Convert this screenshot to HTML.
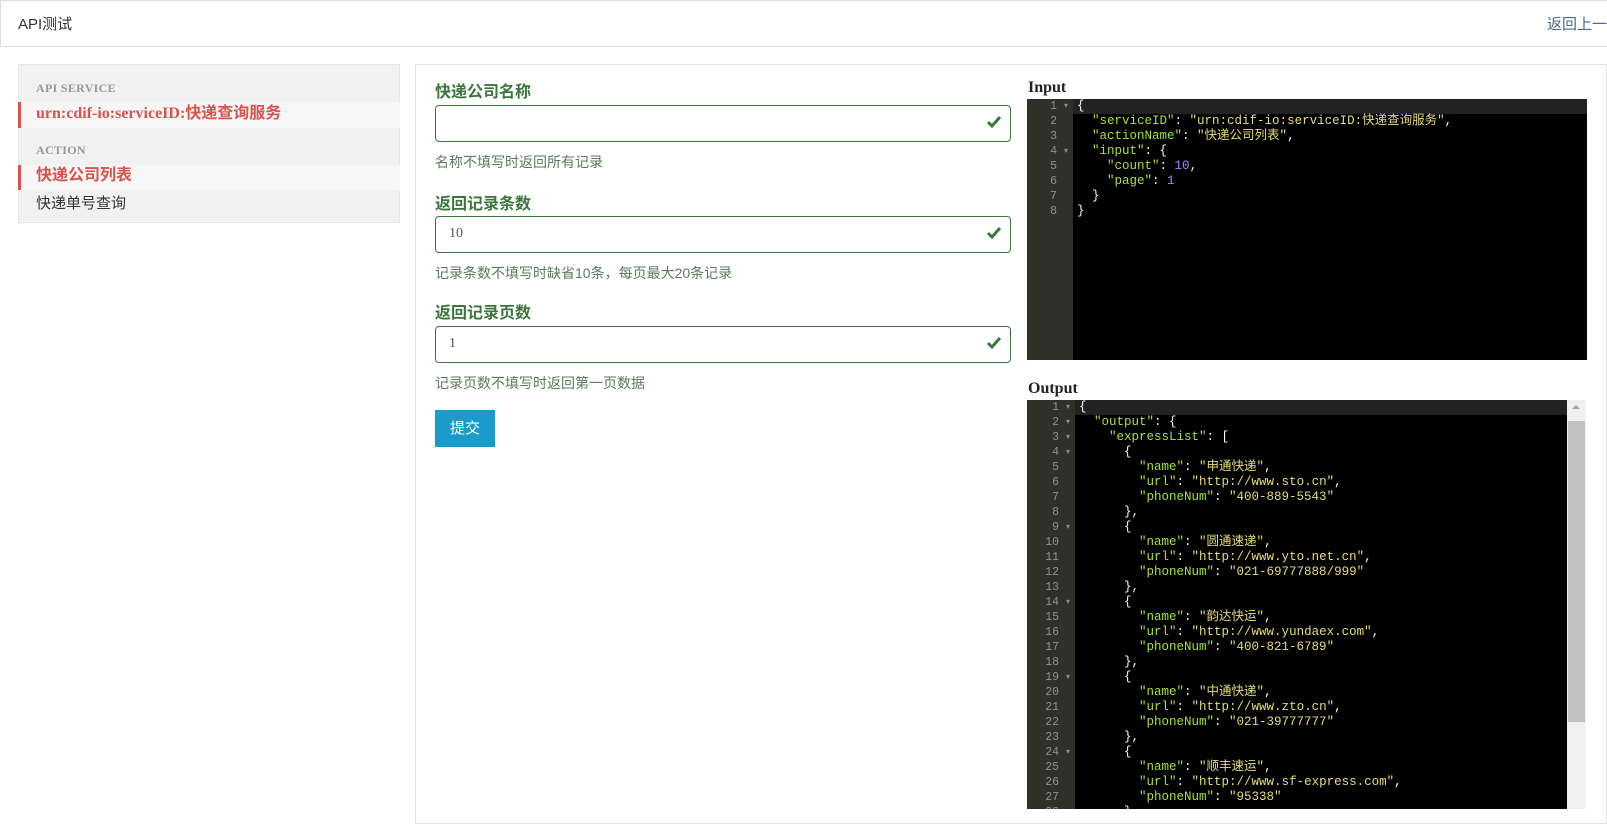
<!DOCTYPE html>
<html><head><meta charset="utf-8">
<style>
*{margin:0;padding:0;box-sizing:border-box}
body{width:1607px;height:809px;overflow:hidden;background:#fff;font-family:"Liberation Sans","Noto Sans CJK SC",sans-serif;position:relative;color:#333}
.a{position:absolute}
.hdr{left:0;top:0;width:1607px;height:47px;border-top:1px solid #ddd;border-bottom:1px solid #ddd;border-left:1px solid #ddd}
.lp{left:18px;top:64px;width:382px;height:159px;background:#f1f1f1;border:1px solid #e6e6e6}
.cap{font:bold 12px "Liberation Serif","Noto Serif CJK SC",serif;color:#999;letter-spacing:.3px}
.sel{background:#f6f6f6;border-left:3px solid #d9534f;color:#d9534f;font-weight:bold;line-height:20px}
.mp{left:415px;top:64px;width:1192px;height:760px;border:1px solid #e3e3e3}
.lbl{font-weight:bold;font-size:16px;color:#3c763d}
.inp{left:435px;width:576px;height:37px;border:1px solid #3c763d;border-radius:4px;font:14px "Liberation Serif",serif;color:#555;padding:9px 13px}
.chk{position:absolute;right:8px;top:9px}
.help{font-size:14px;color:#5b7b5b}
.ed{background:#000;font:12.5px/15px "Liberation Mono","Noto Sans CJK SC",monospace;color:#f8f8f2;overflow:hidden}
.gut{position:absolute;left:0;top:0;bottom:0;background:#2f3129;color:#8f908a;text-align:right;font-size:11.5px}
.gut div{padding-right:16px;position:relative}
.gut div.f:after{content:"▾";position:absolute;right:5px;top:0;font-size:8px}
.code{position:absolute;top:0;white-space:pre}
.k{color:#a6e22e}.s{color:#e6db74}.n{color:#ae81ff}
.act{position:absolute;left:0;right:0;height:15px;background:#222}
</style></head><body>
<div class="a hdr"></div>
<div class="a" style="left:18px;top:13px;font-size:15px;color:#333">API测试</div>
<div class="a" style="left:1547px;top:13px;font-size:15px;color:#4a6a8a;white-space:nowrap">返回上一页</div>

<div class="a lp"></div>
<div class="a cap" style="left:36px;top:81px">API SERVICE</div>
<div class="a sel" style="left:18px;top:102px;width:382px;height:26px;padding:2px 0 0 15px;font-family:'Liberation Serif','Noto Sans CJK SC',serif;font-size:16px">urn:cdif-io:serviceID:快递查询服务</div>
<div class="a cap" style="left:36px;top:143px">ACTION</div>
<div class="a sel" style="left:18px;top:165px;width:382px;height:25px;padding:1px 0 0 15px;font-size:16px">快递公司列表</div>
<div class="a" style="left:36px;top:192px;font-size:15px;color:#333">快递单号查询</div>

<div class="a mp"></div>
<svg width="0" height="0" style="position:absolute"><defs><path id="ck" d="M1 7 L5 11 L13 2" fill="none" stroke="#3c763d" stroke-width="3"/></defs></svg>
<div class="a lbl" style="left:435px;top:78px">快递公司名称</div>
<div class="a inp" style="top:105px"><svg class="chk" width="15" height="14"><use href="#ck"/></svg></div>
<div class="a help" style="left:435px;top:152px">名称不填写时返回所有记录</div>
<div class="a lbl" style="left:435px;top:190px">返回记录条数</div>
<div class="a inp" style="top:216px">10<svg class="chk" width="15" height="14"><use href="#ck"/></svg></div>
<div class="a help" style="left:435px;top:263px">记录条数不填写时缺省10条，每页最大20条记录</div>
<div class="a lbl" style="left:435px;top:299px">返回记录页数</div>
<div class="a inp" style="top:326px">1<svg class="chk" width="15" height="14"><use href="#ck"/></svg></div>
<div class="a help" style="left:435px;top:373px">记录页数不填写时返回第一页数据</div>
<div class="a" style="left:435px;top:410px;width:60px;height:37px;background:#1b9bcc;color:#fff;font-size:15px;text-align:center;line-height:37px">提交</div>

<div class="a" style="left:1028px;top:79px;font:bold 16px 'Liberation Serif',serif;color:#222">Input</div>
<div class="a ed" style="left:1027px;top:99px;width:560px;height:261px">
<div class="act" style="top:0"></div>
<div class="gut" style="width:46px"><div class="f">1</div><div>2</div><div>3</div><div class="f">4</div><div>5</div><div>6</div><div>7</div><div>8</div></div>
<div class="code" style="left:50px">{
  <span class="k">"serviceID"</span>: <span class="s">"urn:cdif-io:serviceID:快递查询服务"</span>,
  <span class="k">"actionName"</span>: <span class="s">"快递公司列表"</span>,
  <span class="k">"input"</span>: {
    <span class="k">"count"</span>: <span class="n">10</span>,
    <span class="k">"page"</span>: <span class="n">1</span>
  }
}</div>
</div>

<div class="a" style="left:1028px;top:380px;font:bold 16px 'Liberation Serif',serif;color:#222">Output</div>
<div class="a ed" style="left:1027px;top:400px;width:540px;height:409px">
<div class="act" style="top:0"></div>
<div class="gut" style="width:48px"><div class="f">1</div><div class="f">2</div><div class="f">3</div><div class="f">4</div><div>5</div><div>6</div><div>7</div><div>8</div><div class="f">9</div><div>10</div><div>11</div><div>12</div><div>13</div><div class="f">14</div><div>15</div><div>16</div><div>17</div><div>18</div><div class="f">19</div><div>20</div><div>21</div><div>22</div><div>23</div><div class="f">24</div><div>25</div><div>26</div><div>27</div><div>28</div></div>
<div class="code" style="left:52px">{
  <span class="k">"output"</span>: {
    <span class="k">"expressList"</span>: [
      {
        <span class="k">"name"</span>: <span class="s">"申通快递"</span>,
        <span class="k">"url"</span>: <span class="s">"http://www.sto.cn"</span>,
        <span class="k">"phoneNum"</span>: <span class="s">"400-889-5543"</span>
      },
      {
        <span class="k">"name"</span>: <span class="s">"圆通速递"</span>,
        <span class="k">"url"</span>: <span class="s">"http://www.yto.net.cn"</span>,
        <span class="k">"phoneNum"</span>: <span class="s">"021-69777888/999"</span>
      },
      {
        <span class="k">"name"</span>: <span class="s">"韵达快运"</span>,
        <span class="k">"url"</span>: <span class="s">"http://www.yundaex.com"</span>,
        <span class="k">"phoneNum"</span>: <span class="s">"400-821-6789"</span>
      },
      {
        <span class="k">"name"</span>: <span class="s">"中通快递"</span>,
        <span class="k">"url"</span>: <span class="s">"http://www.zto.cn"</span>,
        <span class="k">"phoneNum"</span>: <span class="s">"021-39777777"</span>
      },
      {
        <span class="k">"name"</span>: <span class="s">"顺丰速运"</span>,
        <span class="k">"url"</span>: <span class="s">"http://www.sf-express.com"</span>,
        <span class="k">"phoneNum"</span>: <span class="s">"95338"</span>
      },</div>
</div>
<div class="a" style="left:1567px;top:400px;width:19px;height:409px;background:#f1f1f1"></div>
<div class="a" style="left:1572px;top:405px;width:0;height:0;border-left:4px solid transparent;border-right:4px solid transparent;border-bottom:4px solid #a3a3a3"></div>
<div class="a" style="left:1568px;top:421px;width:17px;height:301px;background:#c1c1c1"></div>
</body></html>
